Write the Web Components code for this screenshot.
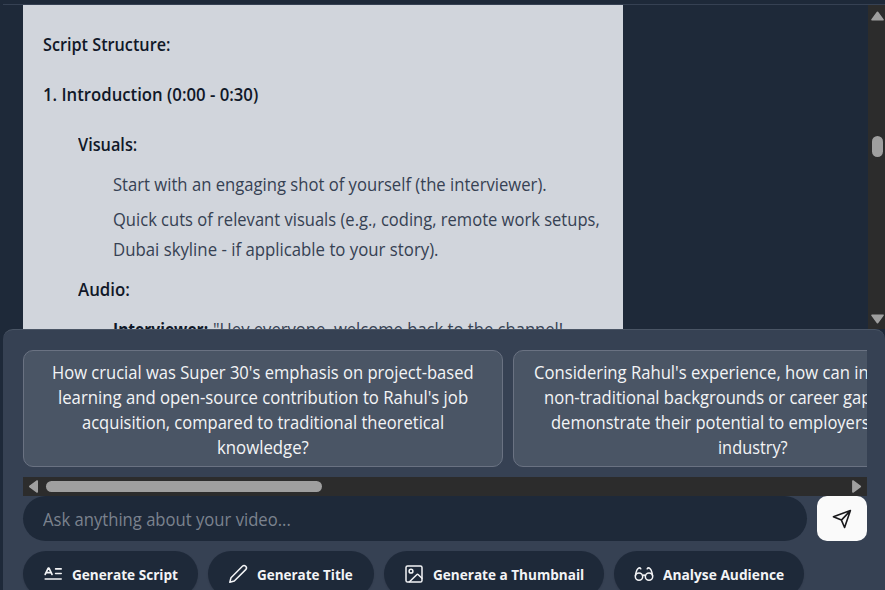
<!DOCTYPE html>
<html lang="en">
<head>
<meta charset="utf-8">
<title>Video assistant</title>
<style>
html,body{margin:0;height:100%;overflow:hidden;background:#1e2939}
body{font-family:"Open Sans","Noto Sans",sans-serif;font-size:17.5px}
</style>
</head>
<body>
<chat-app>
  <script-document slot="document">
    <doc-row class="head"><fit-line w="127">Script Structure:</fit-line></doc-row>
    <doc-row class="head"><fit-line w="215">1. Introduction (0:00 - 0:30)</fit-line></doc-row>
    <doc-row class="head" level="1"><fit-line w="59.5">Visuals:</fit-line></doc-row>
    <doc-row level="2"><fit-line w="433.5">Start with an engaging shot of yourself (the interviewer).</fit-line></doc-row>
    <doc-row level="2" class="last"><fit-line w="487">Quick cuts of relevant visuals (e.g., coding, remote work setups,</fit-line><fit-line w="326">Dubai skyline - if applicable to your story).</fit-line></doc-row>
    <doc-row class="head" level="1"><fit-line w="52">Audio:</fit-line></doc-row>
    <doc-row level="2" inline><fit-line w="95" strong>Interviewer:</fit-line><fit-line w="350">"Hey everyone, welcome back to the channel!</fit-line></doc-row>
  </script-document>
  <suggestion-card slot="cards">
    <fit-line w="422">How crucial was Super 30's emphasis on project-based</fit-line>
    <fit-line w="410">learning and open-source contribution to Rahul's job</fit-line>
    <fit-line w="362">acquisition, compared to traditional theoretical</fit-line>
    <fit-line w="92">knowledge?</fit-line>
  </suggestion-card>
  <suggestion-card slot="cards">
    <fit-line w="445" style="margin-left:6px">Considering Rahul's experience, how can individuals from</fit-line>
    <fit-line w="418">non-traditional backgrounds or career gaps effectively</fit-line>
    <fit-line w="404">demonstrate their potential to employers in the tech</fit-line>
    <fit-line w="70">industry?</fit-line>
  </suggestion-card>
  <prompt-bar slot="prompt"><fit-line w="248">Ask anything about your video...</fit-line></prompt-bar>
  <action-pill slot="actions" style="width:175px">
    <svg slot="icon" viewBox="0 0 20 20"><path d="M2.2 10.4 5.2 4.2h.8l3 6.2M3.3 8.6h4.6" stroke-width="1.7"/><path d="M12.6 4.9h5.6M12.6 9.5h5.6M2.2 15h16" stroke-width="1.6"/></svg>
    <fit-line w="106">Generate Script</fit-line></action-pill>
  <action-pill slot="actions" style="width:166px">
    <svg slot="icon" viewBox="0 0 20 20"><path d="M1.8 18.2 3 13.7 14.4 2.3a2.3 2.3 0 0 1 3.3 3.3L6.3 17z"/></svg>
    <fit-line w="96">Generate Title</fit-line></action-pill>
  <action-pill slot="actions" style="width:220px">
    <svg slot="icon" viewBox="0 0 20 20"><rect x="2" y="2" width="16" height="16" rx="1.6"/><circle cx="7" cy="7.2" r="1.9"/><path d="m5.5 17.8 7.2-7.1a1.2 1.2 0 0 1 1.6 0l3.7 3.6"/></svg>
    <fit-line w="151">Generate a Thumbnail</fit-line></action-pill>
  <action-pill slot="actions" style="width:190px">
    <svg slot="icon" viewBox="0 0 20 20"><circle cx="5" cy="12.6" r="3.7"/><circle cx="15" cy="12.6" r="3.7"/><path d="M8.5 11.8c.8-.8 2.2-.8 3 0M1.4 11.6C2 8 3.2 4.6 4.8 4c.8-.3 1.6.1 2 .8M18.6 11.6C18 8 16.8 4.6 15.2 4c-.8-.3-1.6.1-2 .8"/></svg>
    <fit-line w="121">Analyse Audience</fit-line></action-pill>
</chat-app>
<script>
const define = (name, html, setup) => {
  const t = document.createElement('template');
  t.innerHTML = html;
  customElements.define(name, class extends HTMLElement {
    constructor() {
      super();
      this.attachShadow({mode: 'open'}).append(t.content.cloneNode(true));
    }
    connectedCallback() { if (setup) setup(this); }
  });
};

// A scrollbar with two arrow ends, vertical or horizontal
define('scroll-track', `
<style>
:host{display:flex;flex-direction:column;align-items:center;box-sizing:border-box;background:#2c2c2c;width:17px;flex:none;padding:6px 0 5px 1px}
:host([horizontal]){flex-direction:row;width:auto;height:19px;padding:0 5px}
svg{width:13px;height:10px;flex:none;fill:#9f9f9f;stroke:#9f9f9f;stroke-width:1.6;stroke-linejoin:round}
.thumb{width:11px;height:21px;border-radius:6px;background:#9f9f9f;margin:115px 0 auto}
:host([horizontal]) svg{width:10px;height:13px}
:host([horizontal]) .thumb{width:276px;height:11px;margin:0 auto 0 8px}
.h{display:none}
:host([horizontal]) .v{display:none}:host([horizontal]) .h{display:block}
</style>
<svg class="v" viewBox="0 0 13 10"><path d="M6.5 1.3 12 8.8H1z"/></svg>
<svg class="h" viewBox="0 0 10 13"><path d="M1.8 6.5 9.2 1v11z"/></svg>
<div class="thumb"></div>
<svg class="v" viewBox="0 0 13 10"><path d="M6.5 8.7 12 1.2H1z"/></svg>
<svg class="h" viewBox="0 0 10 13"><path d="M8.3 6.5 .9 1v11z"/></svg>`);

define('chat-app', `
<style>
:host{display:flex;flex-direction:column;width:885px;height:590px;overflow:hidden;box-sizing:border-box;padding-left:3px;padding-top:4px;background:#1e2939}
.view{display:flex;height:325px;flex:none;box-sizing:border-box;border-top:1px solid #364153;overflow:hidden}
.main{flex:1;padding-left:20px}
.panel{flex:1;box-sizing:border-box;background:#364153;border-top:1px solid #4a5565;border-radius:10px 10px 0 0;padding:20px 18px 0 20px;min-height:0;overflow:hidden}
.cards{display:flex;gap:10px;overflow:hidden;padding-bottom:10px}
.actions{display:flex;gap:10px;margin-top:10px}
</style>
<div class="view"><div class="main"><slot name="document"></slot></div><scroll-track></scroll-track></div>
<div class="panel">
<div class="cards"><slot name="cards"></slot></div>
<scroll-track horizontal></scroll-track>
<slot name="prompt"></slot>
<div class="actions"><slot name="actions"></slot></div>
</div>`);

define('script-document', `
<style>
:host{display:flex;flex-direction:column;box-sizing:border-box;width:600px;height:324px;padding:24px 0 0 20px;background:#d1d5dc;color:#364153;overflow:hidden}
::slotted(*){flex:none}
::slotted(.head){font-weight:600;color:#101828;margin-bottom:20px}
::slotted([level="1"]){margin-bottom:10px}
::slotted([level="2"]){margin-bottom:5px}
::slotted(.last){margin-bottom:10px}
</style><slot></slot>`);

define('doc-row', `
<style>
:host{display:block;line-height:30px}
:host([level="1"]){padding-left:35px}
:host([level="2"]){padding-left:70px}
:host([inline]){display:flex;gap:5px}
</style><slot></slot>`);

// One line of text, condensed or expanded so that it spans exactly w pixels
define('fit-line', `
<style>
:host{display:block;white-space:nowrap;flex:none}
:host([strong]){font-weight:700;color:#101828}
span{display:inline-block;transform-origin:0 50%}
</style><span><slot></slot></span>`, el => {
  const span = el.shadowRoot.querySelector('span');
  const w = +el.getAttribute('w');
  el.style.width = w + 'px';
  requestAnimationFrame(() => {
    span.style.transform = 'scaleX(' + w / span.offsetWidth + ')';
  });
});

define('suggestion-card', `
<style>
:host{display:flex;flex-direction:column;align-items:center;box-sizing:border-box;width:480px;height:117px;flex:none;padding-top:9px;border:1px solid #6a7282;border-radius:10px;background:#4a5565;color:#f3f4f6;line-height:25px}
</style><slot></slot>`);

define('prompt-bar', `
<style>
:host{display:flex;gap:10px;height:45px}
.field{flex:1;display:flex;align-items:center;padding:0 20px;box-sizing:border-box;border-radius:23px;background:#1e2939;color:#7b828e}
.send{width:50px;display:grid;place-items:center;border-radius:10px;background:#fafafa}
svg{width:20px;height:20px;fill:none;stroke:#18181b;stroke-width:1.6;stroke-linejoin:round}
</style>
<div class="field"><slot></slot></div>
<div class="send"><svg viewBox="0 0 20 20"><path d="M18.4 1.6 1.4 7.8l8 3.3 3.2 7.4zM18.4 1.6 9.4 11.1"/></svg></div>`);

define('action-pill', `
<style>
:host{display:flex;align-items:center;gap:10px;box-sizing:border-box;height:46px;flex:none;padding-left:20px;border-radius:23px;background:#1e2939;color:#f3f4f6;font-size:15px;font-weight:700;box-shadow:0 1px 2px #0002}
::slotted(svg){width:20px;height:20px;flex:none;fill:none;stroke:#f3f4f6;stroke-width:1.5;stroke-linecap:round;stroke-linejoin:round}
::slotted(fit-line){margin-left:-1px}
</style><slot name="icon"></slot><slot></slot>`);
</script>
</body>
</html>
